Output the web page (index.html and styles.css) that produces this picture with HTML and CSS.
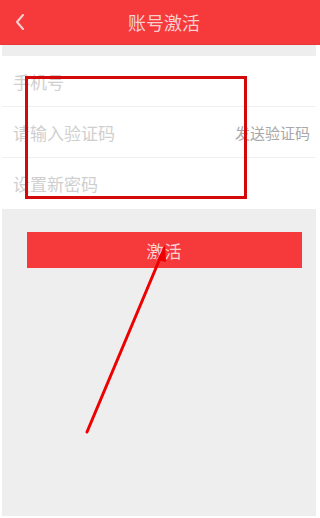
FILE: index.html
```html
<!DOCTYPE html>
<html lang="zh-CN">
<head>
    <meta charset="UTF-8">
    <meta name="viewport" content="width=device-width, initial-scale=1.0">
    <title>账号激活</title>
    <link rel="stylesheet" href="styles.css">
</head>
<body>
    <div class="header">
        <span class="back">
            <svg width="12" height="18" viewBox="0 0 12 18"><path d="M9 2 L3 9 L9 16" fill="none" stroke="#f8d2d2" stroke-width="2" stroke-linecap="round" stroke-linejoin="round"/></svg>
        </span>
        <h1 class="title">账号激活</h1>
    </div>
    <div class="page">
        <div class="form">
            <div class="row">
                <input class="field" type="text" placeholder="手机号">
            </div>
            <div class="row">
                <input class="field" type="text" placeholder="请输入验证码">
                <span class="send-code">发送验证码</span>
            </div>
            <div class="row">
                <input class="field" type="password" placeholder="设置新密码">
            </div>
        </div>
        <button class="submit">激活</button>
    </div>

    <!-- annotation marks on top of the screenshot -->
    <div class="mark-box"></div>
    <svg class="mark-arrow" width="320" height="518" viewBox="0 0 320 518">
        <line x1="87" y1="432" x2="161" y2="256" stroke="#e00" stroke-width="3" stroke-linecap="round"/>
        <polygon points="165,245 157,260 166,262" fill="#e00"/>
    </svg>
</body>
</html>
```

FILE: styles.css
```css
* {
    margin: 0;
    padding: 0;
    box-sizing: border-box;
}
html, body {
    width: 320px;
    height: 518px;
    overflow: hidden;
}
body {
    background: #fff;
    font-family: "Noto Sans CJK SC", "Noto Sans", sans-serif;
    position: relative;
}
.header {
    height: 45px;
    background: #f63a3c;
    border-bottom: 1px solid #e5393b;
    display: flex;
    align-items: center;
    justify-content: center;
    position: relative;
}
.back {
    position: absolute;
    left: 14px;
    top: 13px;
    display: flex;
}
.title {
    font-size: 18px;
    font-weight: normal;
    color: #f8cfcf;
    margin-left: 8px;
}
.page {
    margin: 0 4px 2px 2px;
    height: 471px;
    background: #eeeeee;
    padding-top: 11px;
}
.form {
    background: #fff;
}
.row {
    height: 51px;
    display: flex;
    align-items: center;
    padding: 0 6px 0 11px;
    border-bottom: 1px solid #f0f0f0;
}
.row:last-child {
    border-bottom: none;
}
.field {
    flex: 1;
    min-width: 0;
    border: none;
    outline: none;
    background: transparent;
    font-family: inherit;
    font-size: 17px;
    color: #333;
}
.field::placeholder {
    color: #cfcfcf;
}
.send-code {
    font-size: 15px;
    color: #a8a8a8;
}
.submit {
    display: block;
    margin: 23px 14px 0 25px;
    width: 275px;
    height: 36px;
    border: none;
    background: #f63a3c;
    color: #f9d3d3;
    font-family: inherit;
    font-size: 17px;
    letter-spacing: 1px;
}
.mark-box {
    position: absolute;
    left: 25px;
    top: 76px;
    width: 222px;
    height: 123px;
    border: 3px solid #d40a0a;
}
.mark-arrow {
    position: absolute;
    left: 0;
    top: 0;
}
```
